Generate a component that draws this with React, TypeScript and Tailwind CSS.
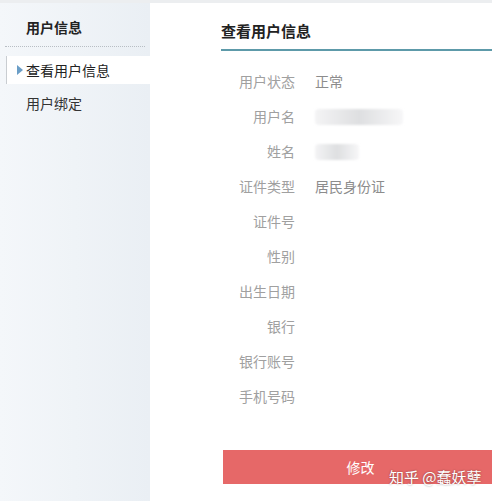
const ROWS: { label: string; value?: string; blur?: number }[] = [
  { label: "用户状态", value: "正常" },
  { label: "用户名", blur: 88 },
  { label: "姓名", blur: 44 },
  { label: "证件类型", value: "居民身份证" },
  { label: "证件号" },
  { label: "性别" },
  { label: "出生日期" },
  { label: "银行" },
  { label: "银行账号" },
  { label: "手机号码" },
];

function Blur({ width }: { width: number }) {
  return (
    <div
      className="h-[16px] rounded-sm bg-gradient-to-r from-[#f4f4f5] via-[#dedfe1] to-[#f7f7f8] blur-[1px]"
      style={{ width }}
    />
  );
}

export default function App() {
  return (
    <div
      className="relative h-[501px] w-[492px] overflow-hidden bg-white"
      style={{ fontFamily: '"Noto Sans CJK SC", "Noto Sans", sans-serif' }}
    >
      <div className="h-[3px] bg-[#eceef0]" />
      <div className="flex h-[498px]">
        <aside className="w-[150px] shrink-0 bg-gradient-to-r from-[#f4f7fa] to-[#eaeff4] pt-[13px]">
          <h2 className="pl-[26px] text-[14px] font-bold leading-[22px] text-[#222]">
            用户信息
          </h2>
          <div className="mx-[5px] mt-[8px] border-b border-dotted border-[#b8bec4]" />
          <div className="mt-[9px] ml-[6px] flex h-[28px] items-center border-l border-[#c9cdd1] bg-white">
            <span className="ml-[10px] mr-[3px] h-0 w-0 border-y-[5px] border-l-[6px] border-y-transparent border-l-[#6b9ec7]" />
            <span className="text-[14px] text-[#222]">查看用户信息</span>
          </div>
          <div className="mt-[8px] pl-[26px] text-[14px] leading-[22px] text-[#333]">
            用户绑定
          </div>
        </aside>
        <main className="flex-1 pl-[71px]">
          <h1 className="mt-[17px] text-[15px] font-bold leading-[22px] text-[#222]">
            查看用户信息
          </h1>
          <div className="mt-[7px] border-b-2 border-[#5d9aa9]" />
          <div className="mt-[13px] flex flex-col">
            {ROWS.map((r) => (
              <div key={r.label} className="flex h-[35px] items-center text-[14px]">
                <span className="w-[74px] text-right text-[#a0a0a0]">{r.label}</span>
                <span className="ml-[20px] text-[#8c8c8c]">
                  {r.value ?? (r.blur ? <Blur width={r.blur} /> : null)}
                </span>
              </div>
            ))}
          </div>
          <button className="mt-[36px] ml-[2px] h-[34px] w-full bg-[#e66868] pl-[4px] text-[14px] text-white">
            修改
          </button>
        </main>
      </div>
      <div className="absolute left-[389px] top-[466px] text-[15px] text-white [text-shadow:0_0_2px_rgba(0,0,0,0.45)]">
        知乎 @蠢妖孽
      </div>
    </div>
  );
}
